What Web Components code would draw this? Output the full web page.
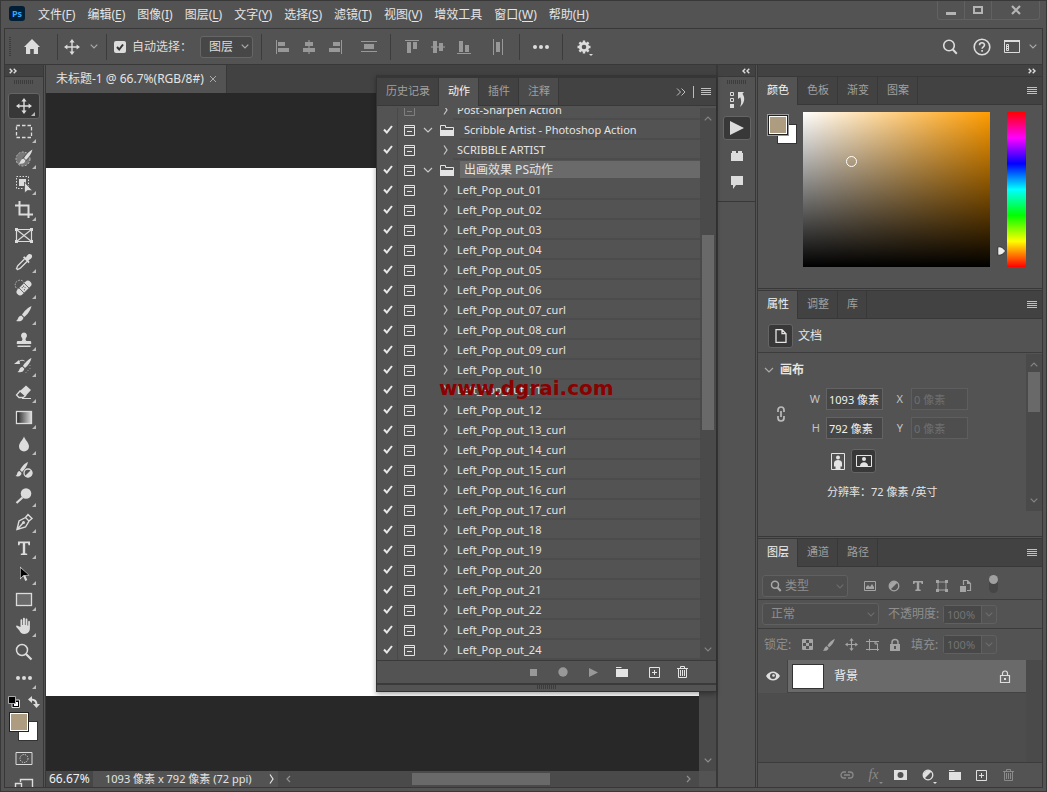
<!DOCTYPE html>
<html lang="zh-CN">
<head>
<meta charset="utf-8">
<title>Photoshop</title>
<style>
html, body { margin: 0; height: 100%; background: #535353; }
body { font: 12px/16px "Noto Sans", "Noto Sans CJK SC", sans-serif; color: #e4e4e4; overflow: hidden; }
</style>
</head>
<body>
<ps-app></ps-app>
<script>
const RESET = `
:host, *, *::before, *::after { box-sizing: border-box; }
:host { display: block; }
:host([hidden]) { display: none; }
button, input, select { font: inherit; color: inherit; margin: 0; padding: 0; border: 0; background: none; border-radius: 0; appearance: none; outline: none; min-width: 0; }
button { display: flex; align-items: center; justify-content: center; flex: none; cursor: default; }
.grip { width: 20px; height: 4px; background: repeating-linear-gradient(90deg, #3c3c3c 0 1px, #535353 1px 2px); }
`;
function define(name, html, setup) {
  const tpl = document.createElement('template');
  tpl.innerHTML = html.replace('<style>', '<style>' + RESET);
  customElements.define(name, class extends HTMLElement {
    constructor() {
      super();
      this.attachShadow({ mode: 'open' }).append(tpl.content.cloneNode(true));
      if (setup) setup.call(this, this.shadowRoot);
    }
  });
}

/* Each icon: [width, height, markup]; currentColor is the ink. */
const ICONS = {
  move: [16,16,'<path d="M8 2v12M2 8h12" stroke="currentColor" stroke-width="1.4"/><path d="M8 0l2.6 3.4H5.4zM8 16l2.6-3.4H5.4zM0 8l3.4-2.6v5.2zM16 8l-3.4-2.6v5.2z" fill="currentColor"/>'],
  marquee: [18,16,'<rect x="1.5" y="1.5" width="15" height="12" fill="none" stroke="currentColor" stroke-width="1.3" stroke-dasharray="3.5 2"/>'],
  quick: [20,20,'<circle cx="9" cy="11" r="7" fill="#777" stroke="#bbb" stroke-dasharray="2 1.5"/><path d="M18.500 2L10 12" stroke="#535353" stroke-width="5"/><path d="M18.500 1.500c-3 1.500-6.500 5-8.500 8.500l2 2c3-3 5.500-6.500 6.500-10.500zM9.500 10.500l2 2c-.5 2.500-3 4-7 3 2.500-1 1.500-4 5-5z" fill="currentColor"/>'],
  object: [20,20,'<rect x="2.500" y="2.500" width="12" height="12" fill="none" stroke="currentColor" stroke-dasharray="1.500 1.500"/><path d="M5 5h7v7H5z" fill="currentColor"/><path d="M10.500 8v11l3-2.500 5 .3z" fill="currentColor" stroke="#535353" stroke-width=".8"/>'],
  crop: [18,18,'<path d="M4.500 0v13.500H18M0 4.500h13.500V17" fill="none" stroke="currentColor" stroke-width="2"/>'],
  frame: [18,16,'<path d="M1.500 1.500h15v12h-15zM1.500 1.500l15 12M16.500 1.500l-15 12" fill="none" stroke="currentColor" stroke-width="1.2"/><path d="M0 0h3v3H0zM15 0h3v3h-3zM0 12h3v3H0zM15 12h3v3h-3z" fill="currentColor"/>'],
  dropper: [18,18,'<path d="M9.500 6L3 12.500c-1 1-.5 1.800-1.500 3l1 1c1.200-1 2-.5 3-1.500L12 8.500" fill="none" stroke="currentColor" stroke-width="1.300"/><path d="M8 4.500l1.200-1.200 1.600 1.100c1-1 1.500-2.600 3-3.400 2.500-.6 4 1.500 3 3.400-.8 1.400-2.300 2-3.300 3l1.200 1.600-1.200 1.200z" fill="currentColor"/>'],
  heal: [20,18,'<circle cx="6" cy="6" r="4.800" fill="none" stroke="#bbb" stroke-dasharray="1.600 1.300"/><g transform="rotate(-45 10 9)"><rect x="1" y="5.500" width="18" height="7" rx="3.500" fill="currentColor"/><path d="M6.500 5.500v7M13.500 5.500v7" stroke="#535353" stroke-width=".8"/><path d="M8.500 7h1v1h-1zM10.500 9h1v1h-1zM8.500 10h1v1h-1zM10.500 7h1v1h-1z" fill="#535353"/></g>'],
  brush: [18,18,'<path d="M16.500 1c-3.500 1.500-7.500 5.300-9.500 8.800l2.200 2.200c3.500-2.500 6.500-7.200 7.300-11zM6.300 10.500l2.200 2.200c-.6 3.200-4 4.300-7.500 3.300 2.400-.8 1.500-4.800 5.300-5.500z" fill="currentColor"/>'],
  stamp: [18,18,'<path d="M9 1.500a3.200 3.200 0 0 1 2 5.500c-.7.800-.7 2 .5 3H15c.8 0 1.200.6 1.200 1.300V13H1.800v-1.700C1.800 10.600 2.200 10 3 10h3.500c1.200-1 1.200-2.200.5-3a3.200 3.200 0 0 1 2-5.500zM2.500 14.500h13V16h-13z" fill="currentColor"/>'],
  hbrush: [20,18,'<path d="M17.500 1c-3 1.300-6.800 4.800-8.500 8l2 2c3-2.500 5.800-6.300 6.500-10zM8.300 9.800l2 2c-.6 3-3.300 4.200-6.800 3.200 2.200-.8 1.500-4.500 4.800-5.200z" fill="currentColor"/><path d="M4 6c1.500-3 4.500-3.200 6.500-2" fill="none" stroke="currentColor"/><path d="M0 7l6 0-1-4z" fill="currentColor"/><path d="M16 8v1M16 11v1M14 13v1M12 15v1" stroke="#999"/>'],
  eraser: [18,18,'<path d="M11 2.500L16 7l-5.500 6L5 8z" fill="currentColor"/><path d="M5 8l-3.500 4 2.500 2.500h4l2.500-1.800z" fill="none" stroke="currentColor" stroke-width="1.300"/><path d="M7 15.500h9" stroke="currentColor"/>'],
  gradient: [18,16,'<defs><linearGradient id="g"><stop offset="0" stop-color="#222"/><stop offset="1" stop-color="#ddd"/></linearGradient></defs><rect x="1.500" y="1.500" width="15" height="12" fill="url(#g)" stroke="currentColor" stroke-width="1.300"/>'],
  drop: [18,18,'<path d="M9 1.500c1.500 3.800 5 6.500 5 10a5 5 0 0 1-10 0c0-3.500 3.500-6.200 5-10z" fill="currentColor"/>'],
  mix: [18,18,'<path d="M13 1C10 2 6.800 5.500 5 9l2 2c2.500-2.500 5.400-6.400 6-10zM4.500 10l2 2c0 3-3 4-6 3 2.200-.8 1-4.500 4-5z" fill="currentColor"/><circle cx="13" cy="12" r="4" fill="none" stroke="currentColor" stroke-width="1.300"/><path d="M10 15l6-6a4 4 0 0 1-6 6z" fill="currentColor"/>'],
  dodge: [18,18,'<circle cx="11" cy="6.500" r="5.300" fill="currentColor"/><path d="M7.500 10.500L1.500 16" stroke="currentColor" stroke-width="2.200"/>'],
  pen: [18,18,'<path d="M2 16.500L4 8l6.500-3.500L14 8l-3.500 6zM2 16.500L8 10M10.500 4.500l2.500-3 4 4-3 2.500" fill="none" stroke="currentColor" stroke-width="1.400"/><circle cx="8.500" cy="9.500" r="1.500" fill="currentColor"/>'],
  type: [16,16,'<path d="M2 1.500h12v3.800h-1.500L12 3.300H9.200v9.900l2 .5V15H4.800v-1.300l2-.5V3.300H4L3.500 5.300H2z" fill="currentColor"/>'],
  ltype: [10,10,'<path d="M0 0h10v3H8.700L8 1.500H6.200v6.800l1.500.4V10H2.300V8.700l1.500-.4V1.500H2L1.300 3H0z" fill="currentColor"/>'],
  select: [18,18,'<path d="M5 1.500v13l3.300-3.200 2 4.700 2-.9-2-4.600h4.200z" fill="currentColor"/><path d="M5.600 3v10l2.700-2.800 5-.5z" fill="#000"/>'],
  rect: [18,16,'<rect x="1.500" y="1.500" width="15" height="12" fill="#6a6a6a" stroke="currentColor" stroke-width="1.300"/>'],
  hand: [18,18,'<path d="M5.500 10V3.200c0-1.400 1.800-1.400 1.800 0V8h.7V1.800c0-1.400 1.900-1.400 1.900 0V8h.7V2.500c0-1.400 1.800-1.400 1.800 0v6h.8V4.800c0-1.300 1.700-1.300 1.700 0v6c0 4-2 6.200-5.500 6.200-3 0-4-1.500-5-3.500L1.300 10c-.7-1.500.9-2 1.700-1z" fill="currentColor"/>'],
  zoom: [18,18,'<circle cx="7" cy="7" r="5.500" fill="none" stroke="currentColor" stroke-width="1.500"/><path d="M11 11l5.500 5.500" stroke="currentColor" stroke-width="2.200"/>'],
  dots: [18,6,'<circle cx="3" cy="3" r="2" fill="currentColor"/><circle cx="9" cy="3" r="2" fill="currentColor"/><circle cx="15" cy="3" r="2" fill="currentColor"/>'],
  defaults: [12,12,'<path d="M4 4h7.500v7.500H4z" fill="#000" stroke="#ddd"/><path d="M6 6h4v4H6z" fill="#fff"/><path d="M.5.500h7v7h-7z" fill="#000" stroke="#aaa"/>'],
  swap: [12,12,'<path d="M3 3.500c3.500 0 5.500 1.500 5.500 5" fill="none" stroke="currentColor" stroke-width="2"/><path d="M0 3.500L4 0v7zM8.500 12L5 8h7z" fill="currentColor"/>'],
  mask: [18,14,'<path d="M1 .5h16v12H1z" fill="none" stroke="currentColor"/><circle cx="9" cy="6.500" r="4" fill="none" stroke="currentColor" stroke-dasharray="1.200 1.200"/>'],
  screen: [18,14,'<path d="M5.500 3V.500h12v10h-8M.5 4.500h6v8h-6z" fill="none" stroke="currentColor" stroke-width="1.400"/>'],
  home: [18,16,'<path d="M9 0l8 8h-2v7h-4.200v-5H7.200v5H3V8H1z" fill="currentColor"/>'],
  chev: [8,5,'<path d="M.7.700L4 4 7.300.7" fill="none" stroke="currentColor" stroke-width="1.200"/>'],
  up: [8,5,'<path d="M.7 4.300L4 1l3.300 3.300" fill="none" stroke="currentColor" stroke-width="1.200"/>'],
  down: [10,6,'<path d="M1 1l4 4 4-4" fill="none" stroke="currentColor" stroke-width="1.200"/>'],
  right: [5,10,'<path d="M1 .5L4 5 1 9.500" fill="none" stroke="currentColor" stroke-width="1.200"/>'],
  left: [5,8,'<path d="M4 1L1 4l3 3" fill="none" stroke="currentColor" stroke-width="1.200"/>'],
  next: [5,8,'<path d="M1 1l3 3-3 3" fill="none" stroke="currentColor" stroke-width="1.200"/>'],
  ffwd: [8,6,'<path d="M.7.700L3 3 .7 5.300M4.700.700L7 3 4.700 5.300" fill="none" stroke="currentColor" stroke-width="1.400"/>'],
  frev: [8,6,'<path d="M3.300.700L1 3l2.300 2.300M7.300.700L5 3l2.300 2.300" fill="none" stroke="currentColor" stroke-width="1.400"/>'],
  more: [10,8,'<path d="M1 .5L4.500 4 1 7.500M5.500.500L9 4 5.500 7.500" fill="none" stroke="currentColor"/>'],
  lines: [10,8,'<path d="M0 .5h10M0 2.500h10M0 4.500h10M0 6.500h10" stroke="currentColor"/>'],
  al: [14,14,'<path d="M.5 0v14" stroke="currentColor"/><path d="M2 2h7v4H2zM2 8h11v4H2z" fill="currentColor"/>'],
  ac: [14,14,'<path d="M7 0v14" stroke="currentColor" stroke-width="1.200"/><path d="M3 2h8v4H3zM1 8h12v4H1z" fill="currentColor"/>'],
  ar: [14,14,'<path d="M13.500 0v14" stroke="currentColor"/><path d="M5 2h7v4H5zM1 8h11v4H1z" fill="currentColor"/>'],
  dh: [16,12,'<path d="M0 .5h16M0 10.500h16" stroke="currentColor"/><path d="M3 3h10v5H3z" fill="currentColor"/>'],
  at: [14,14,'<path d="M0 .5h14" stroke="currentColor"/><path d="M2 2h4v11H2zM8 2h4v7H8z" fill="currentColor"/>'],
  am: [14,14,'<path d="M0 7h14" stroke="currentColor" stroke-width="1.200"/><path d="M2 1h4v12H2zM8 3h4v8H8z" fill="currentColor"/>'],
  ab: [14,14,'<path d="M0 13.500h14" stroke="currentColor"/><path d="M2 1h4v11H2zM8 5h4v7H8z" fill="currentColor"/>'],
  dv: [10,16,'<path d="M.5 0v16M9.500 0v16" stroke="currentColor"/><path d="M3 3h4v10H3z" fill="currentColor"/>'],
  gear: [18,18,'<circle cx="9" cy="9" r="3.700" fill="none" stroke="currentColor" stroke-width="2.800"/><path d="M9 2.500v2.500M9 13v2.500M2.500 9H5M13 9h2.500M4.400 4.400l1.800 1.800M11.800 11.800l1.800 1.800M4.400 13.600l1.800-1.800M11.800 6.200l1.800-1.800" stroke="currentColor" stroke-width="2.400"/><path d="M14 16h4l-2 2z" fill="currentColor"/>'],
  search: [16,16,'<circle cx="7" cy="6.500" r="5.300" fill="none" stroke="currentColor" stroke-width="1.600"/><path d="M10.800 10.500l4 4.200" stroke="currentColor" stroke-width="2"/>'],
  find: [12,12,'<circle cx="5" cy="4.800" r="3.500" fill="none" stroke="currentColor" stroke-width="1.500"/><path d="M7.500 7.500l3.200 3.500" stroke="currentColor" stroke-width="2"/>'],
  help: [18,18,'<circle cx="9" cy="9" r="7.800" fill="none" stroke="currentColor" stroke-width="1.600"/><path d="M6.500 7.200C6.500 4 11.500 4 11.500 7c0 1.800-2.400 1.800-2.400 3.800M9.100 12v1.700" fill="none" stroke="currentColor" stroke-width="1.600"/>'],
  work: [16,13,'<path d="M.5 1h15v11.500H.5z" fill="none" stroke="currentColor"/><path d="M0 0h16v2H0z" fill="currentColor"/><path d="M2.500 4.500h2v6h-2zM2.500 6.500h2M2.500 8.500h2" fill="none" stroke="currentColor"/>'],
  min: [10,3,'<path d="M0 0h10v3H0z" fill="currentColor"/>'],
  max: [10,8,'<path d="M1 1h8v6H1z" fill="none" stroke="currentColor" stroke-width="2"/>'],
  close: [10,8,'<path d="M1 0l8 8M9 0L1 8" stroke="currentColor" stroke-width="2.200"/>'],
  x: [6,6,'<path d="M0 0l6 6M6 0L0 6" stroke="currentColor"/>'],
  dialog: [11,11,'<path d="M.5.500h10v10H.5zM.5 2.500h10M3 6.500h5" fill="none" stroke="currentColor"/>'],
  folder: [14,11,'<path d="M.5 10.500v-10h5v2h8v8z" fill="none" stroke="currentColor"/><path d="M0 5h14v6H0z" fill="currentColor"/>'],
  group: [12,10,'<path d="M0 0h5l1 1H0zM0 2h12v8H0z" fill="currentColor"/>'],
  stop: [7,7,'<path d="M0 0h7v7H0z" fill="currentColor"/>'],
  rec: [10,10,'<circle cx="5" cy="5" r="4.700" fill="currentColor"/>'],
  play: [9,9,'<path d="M0 0l9 4.500L0 9z" fill="currentColor"/>'],
  bigplay: [14,14,'<path d="M0 0l14 7-14 7z" fill="currentColor"/>'],
  plus: [11,11,'<path d="M.5.500h10v10H.5zM5.500 3v5M3 5.500h5" fill="none" stroke="currentColor"/>'],
  trash: [11,12,'<path d="M0 2.500h11M3.500 2V.500h4V2M1.500 3v8.500h8V3M3.500 4v6M5.500 4v6M7.500 4v6" fill="none" stroke="currentColor"/>'],
  history: [16,18,'<path d="M1.500 1.500h3v3h-3zM1.500 7.500h3v3h-3z" fill="none" stroke="currentColor"/><path d="M1 13h4v4H1z" fill="currentColor"/><path d="M9 1h6l-1.500 1.800C16.500 7 15.500 12.500 11 16c1.500-3.500 1.500-6.500.3-9.800L9 8z" fill="currentColor"/>'],
  brick: [12,12,'<path d="M0 4h1V2h4v2h2V2h4v2h1v8H0z" fill="currentColor"/>'],
  chat: [14,13,'<path d="M1 0h12v9H6l-3 4V9H1z" fill="currentColor"/>'],
  page: [12,14,'<path d="M1 .7h6l4 4v8.600H1zM7 .7v4h4" fill="none" stroke="currentColor" stroke-width="1.300"/>'],
  link: [10,16,'<path d="M2 6V4a3 3 0 0 1 6 0v2M2 10v2a3 3 0 0 0 6 0v-2M5 5v6" fill="none" stroke="currentColor" stroke-width="1.700"/>'],
  port: [14,17,'<path d="M.5.500h13v16H.5z" fill="none" stroke="currentColor"/><circle cx="7" cy="4.500" r="2" fill="currentColor"/><path d="M3 10c0-4 8-4 8 0v3.500H9.500V16h-5v-2.500H3z" fill="currentColor"/>'],
  land: [16,12,'<path d="M.5.500h15v11H.5z" fill="none" stroke="currentColor"/><circle cx="8" cy="4" r="2" fill="currentColor"/><path d="M4 11c0-5 8-5 8 0z" fill="currentColor"/>'],
  image: [12,10,'<path d="M.5.500h11v9H.5z" fill="none" stroke="currentColor"/><path d="M2 8V6l2-2 2 2 2-3 2 3v2z" fill="currentColor"/>'],
  adjust: [12,12,'<circle cx="6" cy="6" r="4.800" fill="none" stroke="currentColor" stroke-width="1.300"/><path d="M2.500 9.500l7-7a5 5 0 0 0-7 7z" fill="currentColor"/>'],
  shape: [12,12,'<path d="M2 2h8v8H2z" fill="none" stroke="currentColor"/><path d="M0 0h3v3H0zM9 0h3v3H9zM0 9h3v3H0zM9 9h3v3H9z" fill="currentColor"/>'],
  smart: [12,12,'<path d="M3.500 5V.500h4l3 3v7H7" fill="none" stroke="currentColor" stroke-width="1.200"/><path d="M0 6h6v6H0zM7 0v4h4z" fill="currentColor"/>'],
  checker: [11,11,'<path d="M.5.500h10v10H.5z" fill="none" stroke="currentColor"/><path d="M1 1h3v3H1zM7 1h3v3H7zM4 4h3v3H4zM1 7h3v3H1zM7 7h3v3H7z" fill="currentColor"/>'],
  board: [14,12,'<path d="M3.500 0v2M0 2.500h13M3.500 2.500v9M0 10.500h13M11.500 12V5L9 2.500V5h2.500" fill="none" stroke="currentColor"/>'],
  lock: [10,12,'<path d="M2 5V3.500a3 3 0 0 1 6 0V5" fill="none" stroke="currentColor" stroke-width="1.500"/><path d="M0 5h10v7H0z" fill="currentColor"/><path d="M4 7h2v3H4z" fill="#535353"/>'],
  lockline: [10,13,'<path d="M2.500 5V3.500a2.500 2.500 0 0 1 5 0V5M.5 5.500h9v7h-9z" fill="none" stroke="currentColor" stroke-width="1.200"/><path d="M4 8h2v2H4z" fill="currentColor"/>'],
  eye: [14,10,'<path d="M0 5c3.500-6 10.500-6 14 0-3.500 6-10.500 6-14 0z" fill="currentColor"/><circle cx="7" cy="5" r="3" fill="#535353"/><circle cx="7.500" cy="4.500" r="1.300" fill="currentColor"/>'],
  chain: [14,8,'<path d="M6 1H4a3 3 0 0 0 0 6h2M8 1h2a3 3 0 0 1 0 6H8M4 4h6" fill="none" stroke="currentColor" stroke-width="1.300"/>'],
  lmask: [13,10,'<path d="M0 0h13v10H0zM6.500 2a3 3 0 1 0 0 6 3 3 0 0 0 0-6z" fill="currentColor" fill-rule="evenodd"/>'],
};
customElements.define('ps-icon', class extends HTMLElement {
  constructor() { super(); this.attachShadow({ mode: 'open' }); }
  connectedCallback() {
    const [w, h, body] = ICONS[this.getAttribute('name')];
    const size = this.getAttribute('size');
    this.shadowRoot.innerHTML = `<style>:host{display:inline-flex;flex:none;pointer-events:none}svg{display:block;overflow:visible}</style><svg width="${size || w}" height="${size || h}" viewBox="0 0 ${w} ${h}" aria-hidden="true">${body}</svg>`;
  }
});

/* ---------- menu bar ---------- */
define('ps-menubar', `<style>
:host { display: flex; height: 27px; flex: none; padding-left: 8px; }
.logo { width: 16px; height: 15px; margin: 5px 7px 0 0; border-radius: 3px; background: #001e36; color: #31a8ff; font: bold 9px/15px "Open Sans", sans-serif; text-align: center; flex: none; }
nav { display: flex; flex: 1; }
nav button { padding: 0 6px; white-space: nowrap; }
u { text-underline-offset: 2px; }
.win { display: flex; height: 19px; margin-right: 6px; border: 1px solid #616161; border-top: 0; border-radius: 0 0 3px 3px; color: #b4b4b4; }
.win button { width: 27px; border-right: 1px solid #616161; }
.win button:last-child { width: 47px; border: 0; }
.win button:first-child { padding-top: 6px; }
</style>
<div class="logo">Ps</div>
<nav></nav>
<div class="win"><button aria-label="最小化"><ps-icon name="min"></ps-icon></button><button aria-label="最大化"><ps-icon name="max"></ps-icon></button><button aria-label="关闭"><ps-icon name="close"></ps-icon></button></div>`,
function (root) {
  root.querySelector('nav').innerHTML = '文件F 编辑E 图像I 图层L 文字Y 选择S 滤镜T 视图V 增效工具 窗口W 帮助H'.split(' ')
    .map(t => `<button>${t.replace(/([A-Z])$/, '(<u>$1</u>)')}</button>`).join('');
});

/* ---------- drop-down ---------- */
define('ps-select', `<style>
:host { display: grid; align-items: center; height: 22px; border: 1px solid #666; border-radius: 3px; background: #474747; }
select, ps-icon { grid-area: 1 / 1; }
select { width: 100%; height: 100%; padding-left: var(--pad, 8px); }
ps-icon { justify-self: end; margin-right: 3px; color: var(--chev, #aaa); }
</style><select></select><ps-icon name="chev"></ps-icon>`,
function (root) {
  const s = root.querySelector('select');
  s.setAttribute('aria-label', this.getAttribute('label') || '');
  s.innerHTML = `<option>${this.getAttribute('value') || ''}</option>`;
});

/* ---------- options bar ---------- */
define('ps-options', `<style>
:host { display: flex; align-items: center; height: 36px; flex: none; border-bottom: 1px solid #383838; color: #dcdcdc; padding-right: 2px; }
.bar, .group { display: flex; align-items: center; }
.bar { flex: 1; gap: 8px; }
.handle { width: 2px; height: 20px; margin: 0 -4px 0 4px; background: repeating-linear-gradient(#3c3c3c 0 1px, #535353 1px 2px); }
hr { width: 1px; height: 26px; margin: 0; border: 0; background: #3c3c3c; flex: none; }
.home { width: 34px; }
.mv { margin: 0 -4px 0 -8px; } .mv button { width: 28px; } .mv button + button { width: 16px; color: #aaa; }
.auto { margin-left: -1px; gap: 6px; }
.auto label { width: 60px; }
.auto input { width: 12px; height: 12px; border-radius: 2px; background: #dcdcdc url("data:image/svg+xml,%3Csvg xmlns='http://www.w3.org/2000/svg' width='12' height='12'%3E%3Cpath d='M3 6l2.200 2.500L9 3.500' fill='none' stroke='%23333' stroke-width='2'/%3E%3C/svg%3E"); }
ps-select { width: 53px; }
.ic button { width: 26px; }
.dim { color: #989898; }
.r button { width: 32px; } .r button:nth-child(3) { width: 28px; } .r button:last-child { width: 14px; color: #aaa; }
</style>
<div class="bar"><span class="handle"></span>
<button class="home" aria-label="主页"><ps-icon name="home"></ps-icon></button><hr>
<div class="group mv"><button aria-label="移动工具"><ps-icon name="move"></ps-icon></button><button aria-label="预设"><ps-icon name="chev"></ps-icon></button></div><hr>
<div class="group auto"><input type="checkbox" id="auto" checked><label for="auto">自动选择：</label></div>
<ps-select label="自动选择" value="图层"></ps-select><hr>
<div class="group ic dim"><button aria-label="左对齐"><ps-icon name="al"></ps-icon></button><button aria-label="水平居中"><ps-icon name="ac"></ps-icon></button><button aria-label="右对齐"><ps-icon name="ar"></ps-icon></button></div>
<div class="group ic dim"><button aria-label="垂直分布"><ps-icon name="dh"></ps-icon></button></div><hr>
<div class="group ic dim"><button aria-label="顶对齐"><ps-icon name="at"></ps-icon></button><button aria-label="垂直居中"><ps-icon name="am"></ps-icon></button><button aria-label="底对齐"><ps-icon name="ab"></ps-icon></button></div>
<div class="group ic dim"><button aria-label="水平分布"><ps-icon name="dv"></ps-icon></button></div><hr>
<div class="group ic"><button aria-label="更多"><ps-icon name="dots"></ps-icon></button></div><hr>
<div class="group ic"><button aria-label="设置"><ps-icon name="gear"></ps-icon></button></div></div>
<div class="group r"><button aria-label="搜索"><ps-icon name="search"></ps-icon></button><button aria-label="帮助"><ps-icon name="help"></ps-icon></button><button aria-label="工作区"><ps-icon name="work"></ps-icon></button><button aria-label="工作区菜单"><ps-icon name="chev"></ps-icon></button></div>`);

/* ---------- foreground / background swatches ---------- */
define('ps-swatches', `<style>
:host { position: relative; width: 29px; height: 29px; flex: none; }
button { position: absolute; width: 20px; height: 20px; border: 1px solid #333; }
.bg { right: 0; bottom: 0; background: #fff; }
.fg { left: 0; top: 0; background: #ae9c80; border-color: #222; box-shadow: inset 0 0 0 1px #fff; outline: var(--ring, 0) solid #999; }
</style><button class="bg" aria-label="背景色"></button><button class="fg" aria-label="前景色"></button>`);

/* ---------- toolbar ---------- */
define('ps-toolbar', `<style>
:host { display: flex; flex-direction: column; align-items: center; width: 39px; flex: none; border-right: 1px solid #383838; overflow: hidden; color: #dcdcdc; padding-right: 1px; }
.strip { height: 12px; align-self: stretch; margin-right: -1px; background: #424242; border-bottom: 1px solid #383838; padding-left: 4px; display: flex; align-items: center; justify-content: flex-start; }
.grip { margin: 3px 0 9px; flex: none; }
.tool { position: relative; width: 32px; height: 26px; border-radius: 3px; }
.tool.more::after { content: ""; position: absolute; right: 4px; bottom: 2px; border: 2px solid; border-color: transparent #bbb #bbb transparent; }
.on { background: #383838; border: 1px solid #656565; }
.mini { display: flex; gap: 8px; margin: 5px 0 4px; align-items: center; }
ps-swatches { margin-bottom: 11px; }
.mask { margin-bottom: 13px; }
</style>
<button class="strip" aria-label="展开"><ps-icon name="ffwd"></ps-icon></button><div class="grip"></div>
<div class="tools"></div>
<div class="mini"><button aria-label="默认颜色"><ps-icon name="defaults"></ps-icon></button><button aria-label="切换颜色"><ps-icon name="swap"></ps-icon></button></div>
<ps-swatches></ps-swatches>
<button class="mask" aria-label="快速蒙版"><ps-icon name="mask"></ps-icon></button>
<button aria-label="屏幕模式"><ps-icon name="screen"></ps-icon></button>`,
function (root) {
  const single = ['frame', 'mix', 'zoom'];
  root.querySelector('.tools').innerHTML = 'move marquee quick object crop frame dropper heal brush stamp hbrush eraser gradient drop mix dodge pen type select rect hand zoom dots'.split(' ')
    .map((n, i) => `<button class="tool ${single.includes(n) ? '' : 'more'} ${i ? '' : 'on'}" aria-label="${n}"><ps-icon name="${n}"></ps-icon></button>`).join('');
});

/* ---------- document window ---------- */
define('ps-document', `<style>
:host { display: grid; grid-template: 28px 1fr 16px / 1fr 17px; flex: 1; min-width: 0; margin-left: 1px; border: solid #383838; border-width: 0 1px; position: relative; }
.tabs { grid-column: 1 / 3; background: #424242; display: flex; }
.tab { display: flex; align-items: center; background: #535353; padding: 0 10px; border-right: 1px solid #383838; gap: 6px; white-space: nowrap; }
.tab button { color: #aaa; }
.stage { background: #282828; display: flex; padding: 75px 0; }
.canvas { flex: 1; background: #fff; }
.v { background: #4a4a4a; display: flex; align-items: flex-end; justify-content: center; padding-bottom: 8px; color: #909090; }
.status { display: flex; background: #535353; align-items: center; min-width: 0; white-space: nowrap; }
.status input { width: 47px; height: 16px; padding-left: 3px; background: #464646; color: #f0f0f0; }
.info { padding-left: 12px; width: 171px; font: 11px/16px "Noto Sans", "Noto Sans CJK SC", sans-serif; }
.more { width: 14px; height: 16px; }
.h { flex: 1; align-self: stretch; display: flex; align-items: center; justify-content: space-between; background: #4a4a4a; padding: 0 8px; color: #909090; }
.thumb { width: 138px; height: 12px; margin-right: 16px; background: #696969; }
</style>
<div class="tabs"><div class="tab"><span>未标题-1 @ 66.7%(RGB/8#)</span><button aria-label="关闭文档"><ps-icon name="x"></ps-icon></button></div></div>
<div class="stage"><div class="canvas"></div></div>
<div class="v"><ps-icon name="chev"></ps-icon></div>
<div class="status"><input aria-label="缩放" value="66.67%"><span class="info">1093 像素 x 792 像素 (72 ppi)</span>
<button class="more" aria-label="状态菜单"><ps-icon name="right"></ps-icon></button>
<div class="h"><ps-icon name="left"></ps-icon><span class="thumb"></span><ps-icon name="next"></ps-icon></div></div>
<div></div><slot></slot>`);

/* ---------- tabs ---------- */
define('ps-tabs', `<style>
:host { display: flex; height: 28px; flex: none; background: #424242; border-bottom: 1px solid #383838; font-size: 11px; color: #a0a0a0; }
button { height: 27px; padding: 0 8px 2px 9px; border-right: 1px solid #383838; }
.on { background: #535353; color: #f4f4f4; height: 28px; padding-bottom: 3px; }
.lit { background: #4b4b4b; }
.menu { margin-left: auto; padding: 0 5px 0 0; border: 0; gap: 7px; color: #c0c0c0; }
.menu i { width: 1px; height: 12px; background: #bbb; }
</style>`,
function (root) {
  const on = +(this.getAttribute('on') || 0), lit = this.getAttribute('lit');
  const names = this.getAttribute('names').split(' ');
  root.append(...names.map((n, i) => {
    const b = document.createElement('button');
    b.textContent = n;
    b.setAttribute('role', 'tab');
    b.className = (i === on ? 'on' : '') + (lit === String(i) ? 'lit' : '');
    return b;
  }));
  const m = document.createElement('button');
  m.className = 'menu';
  m.setAttribute('aria-label', '面板菜单');
  m.innerHTML = (this.hasAttribute('float') ? '<ps-icon name="more"></ps-icon><i></i>' : '') + '<ps-icon name="lines"></ps-icon>';
  root.append(m);
});

/* ---------- scroll bar ---------- */
define('ps-scroll', `<style>
:host { display: flex; flex-direction: column; align-items: center; width: 16px; flex: none; padding: 8px 0; background: #4a4a4a; color: #858585; }
div { width: 12px; background: #696969; flex: 0 0 var(--len); margin-top: var(--at); }
.end { margin-top: auto; }
</style><ps-icon name="up"></ps-icon><div></div><ps-icon class="end" name="chev"></ps-icon>`);

/* ---------- actions panel ---------- */
define('ps-action', `<style>
:host { display: flex; align-items: center; height: 20px; flex: none; white-space: nowrap; font-size: 11px; }
input { width: 21px; height: 20px; flex: none; border-right: 1px solid #494949; }
input:checked { background: url("data:image/svg+xml,%3Csvg xmlns='http://www.w3.org/2000/svg' width='10' height='9'%3E%3Cpath d='M1 4.500l2.800 3L9 1' fill='none' stroke='%23e8e8e8' stroke-width='2'/%3E%3C/svg%3E") 6px 5px no-repeat; }
.dlg { width: 23px; height: 20px; }
.arrow { width: 32px; height: 20px; justify-content: flex-end; padding-right: 5px; color: #c8c8c8; }
.folder { display: none; }
.name { flex: 1; align-self: stretch; padding-left: 4px; border-bottom: 2px solid #4c4c4c; line-height: 19px; }
:host([set]) .folder { display: flex; width: 27px; padding-left: 7px; }
:host([set]) .arrow { width: 12px; padding: 0; }
:host([set]) .name { border-top: 1px solid #535353; line-height: 18px; }
:host([selected]) .name { background: #6a6a6a; background-clip: padding-box; border-bottom-color: #535353; font-size: 12px; }
:host([off]) .dlg { opacity: .3; }
</style>
<input type="checkbox" aria-label="切换项目"><button class="dlg" aria-label="切换对话"><ps-icon name="dialog"></ps-icon></button><button class="arrow" aria-label="展开"></button><span class="folder"><ps-icon name="folder"></ps-icon></span><div class="name"><slot></slot></div>`,
function (root) {
  root.querySelector('input').checked = !this.hasAttribute('off');
  root.querySelector('.arrow').innerHTML = `<ps-icon name="${this.hasAttribute('set') ? 'down' : 'right'}"></ps-icon>`;
});
define('ps-actions', `<style>
:host { position: absolute; top: 10px; right: 0; bottom: 95px; width: 340px; display: flex; flex-direction: column; background: #535353; border: 1px solid #333; border-top: 3px solid #363636; border-right: 0; box-shadow: 0 2px 5px rgba(0,0,0,.35); }
.body { flex: 1; display: flex; min-height: 0; padding-top: 2px; }
.list { flex: 1; display: flex; flex-direction: column; justify-content: flex-end; overflow: hidden; min-width: 0; }
ps-scroll { --at: 114px; --len: 195px; }
.foot { display: flex; justify-content: flex-end; align-items: center; height: 25px; flex: none; border: solid #3a3a3a; border-width: 1px 0 2px; padding-right: 20px; }
.foot button { width: 28px; height: 20px; } .foot .w { width: 30px; } .foot .g { margin-right: 4px; }
.dim { color: #989898; }
.resize { height: 6px; flex: none; display: flex; justify-content: center; }
.mark { position: absolute; left: 62px; top: 298px; font: bold 20px/24px "DejaVu Sans", sans-serif; color: #8b0000; pointer-events: none; }
</style>
<ps-tabs names="历史记录 动作 插件 注释" on="1" lit="3" float></ps-tabs>
<div class="body"><div class="list"></div><ps-scroll></ps-scroll></div>
<div class="foot"><button class="w dim" aria-label="停止"><ps-icon name="stop"></ps-icon></button><button class="w dim" aria-label="记录"><ps-icon name="rec"></ps-icon></button><button class="w dim" aria-label="播放"><ps-icon name="play"></ps-icon></button><button class="g" aria-label="新组"><ps-icon name="group"></ps-icon></button><button aria-label="新动作"><ps-icon name="plus"></ps-icon></button><button aria-label="删除"><ps-icon name="trash"></ps-icon></button></div>
<div class="resize"><div class="grip"></div></div>
<div class="mark">www.dgrai.com</div>`,
function (root) {
  const curl = [7, 8, 9, 13, 14, 15, 16, 17];
  let html = '<ps-action off>Post-Sharpen Action</ps-action><ps-action set>Scribble Artist - Photoshop Action</ps-action><ps-action>SCRIBBLE ARTIST</ps-action><ps-action set selected>出画效果 PS动作</ps-action>';
  for (let i = 1; i <= 24; i++) html += `<ps-action>Left_Pop_out_${String(i).padStart(2, '0')}${curl.includes(i) ? '_curl' : ''}</ps-action>`;
  root.querySelector('.list').innerHTML = html;
});

/* ---------- icon dock ---------- */
define('ps-dock', `<style>
:host { width: 39px; flex: none; border: solid #383838; border-width: 0 1px; color: #dcdcdc; }
.strip { width: 100%; height: 12px; background: #424242; border-bottom: 1px solid #383838; padding-left: 18px; }
.icons { display: flex; flex-direction: column; align-items: center; padding: 3px 0 4px; border-bottom: 1px solid #383838; }
.icons button { width: 28px; height: 24px; border-radius: 3px; margin-bottom: 3px; }
.icons .on { background: #383838; border: 1px solid #656565; }
.icons button:nth-of-type(1) { margin-top: 3px; height: 26px; }
</style>
<button class="strip" aria-label="展开面板"><ps-icon name="frev"></ps-icon></button>
<div class="icons"><div class="grip"></div><button aria-label="历史记录"><ps-icon name="history"></ps-icon></button><button class="on" aria-label="动作"><ps-icon name="bigplay"></ps-icon></button><button aria-label="插件"><ps-icon name="brick"></ps-icon></button><button aria-label="注释"><ps-icon name="chat"></ps-icon></button></div>`);

/* ---------- colour panel ---------- */
define('ps-color', `<style>
:host { display: flex; height: 183px; padding: 7px 16px 21px 10px; }
ps-swatches { margin: 3px 6px 0 0; --ring: 1px; }
.field { flex: 1; position: relative; background: linear-gradient(to top, #000, transparent), linear-gradient(to right, #fff, #ff9c00); }
.dot { position: absolute; left: 43px; top: 44px; width: 11px; height: 11px; border: 1px solid #fff; border-radius: 50%; }
.hue { width: 19px; margin-left: 17px; position: relative; background: linear-gradient(#f00, #f0f, #00f, #0ff, #0f0, #ff0, #f00); }
.ptr { position: absolute; left: -10px; bottom: 11px; }
</style>
<ps-swatches></ps-swatches><div class="field"><span class="dot"></span></div>
<div class="hue"><svg class="ptr" width="9" height="10" viewBox="0 0 9 10"><path d="M.8 1c3-1 6 1.500 7.700 4C6.800 7.500 3.800 10 .8 9z" fill="#eee" stroke="#222" stroke-width=".8"/></svg></div>`);

/* ---------- properties panel ---------- */
define('ps-properties', `<style>
:host { height: 217px; }
.top { display: flex; align-items: center; height: 34px; border-bottom: 1px solid #3c3c3c; padding-left: 10px; gap: 5px; }
.btn { width: 25px; height: 24px; border: 1px solid #656565; border-radius: 3px; background: #383838; }
.body { display: flex; justify-content: space-between; padding-top: 1px; }
.main { width: 240px; padding: 8px 0 0 6px; }
.head { display: flex; align-items: center; gap: 6px; height: 16px; font-weight: bold; justify-content: flex-start; }
.head ps-icon { color: #aaa; }
.grid { display: grid; grid-template-columns: 34px 28px 58px 27px 58px; row-gap: 7px; margin: 10px 0; align-items: center; font-size: 11px; }
.grid ps-icon { grid-row: 1 / 3; justify-self: center; color: #bbb; }
label { text-align: right; padding-right: 6px; color: #c4c4c4; }
label.b { padding-right: 8px; }
.grid input { width: 57px; height: 22px; border: 1px solid #636363; background: #464646; padding-left: 2px; color: #f0f0f0; }
input:disabled { background: #4e4e4e !important; border-color: #5e5e5e !important; color: #6e6e6e !important; }
.orient { display: flex; align-items: center; gap: 6px; padding-left: 67px; }
.res { padding: 10px 0 0 63px; line-height: 18px; font-size: 11px; }
ps-scroll { height: 157px; --at: 5px; --len: 40px; }
</style>
<div class="top"><button class="btn" aria-label="文档"><ps-icon name="page"></ps-icon></button><span>文档</span></div>
<div class="body"><div class="main"><button class="head"><ps-icon name="down"></ps-icon>画布</button>
<div class="grid"><ps-icon name="link"></ps-icon><label for="w">W</label><input id="w" value="1093 像素"><label class="b" for="x">X</label><input id="x" value="0 像素" disabled><label for="h">H</label><input id="h" value="792 像素"><label class="b" for="y">Y</label><input id="y" value="0 像素" disabled></div>
<div class="orient"><button aria-label="纵向"><ps-icon name="port"></ps-icon></button><button class="btn" aria-label="横向"><ps-icon name="land"></ps-icon></button></div>
<div class="res">分辨率：72 像素 /英寸</div></div><ps-scroll></ps-scroll></div>`);

/* ---------- layers panel ---------- */
define('ps-layers', `<style>
:host { display: flex; flex-direction: column; flex: 1; min-height: 0; color: #8e8e8e; }
.row { display: flex; align-items: center; flex: none; padding-left: 4px; border-bottom: 1px solid #3c3c3c; }
.filter { height: 33px; padding-top: 6px; } .mode { height: 29px; } .lock { height: 31px; border: 0; padding-left: 6px; }
ps-select { background: #4e4e4e; border-color: #606060; --chev: #6c6c6c; }
.kind { display: grid; align-items: center; }
.kind > * { grid-area: 1 / 1; } .kind > ps-icon { margin-left: 8px; z-index: 1; color: #a8a8a8; }
.kind ps-select { width: 86px; --pad: 22px; }
.blend { width: 117px; margin-right: 9px; }
.kinds { display: flex; margin-left: 10px; color: #a4a4a4; } .kinds button { width: 24px; height: 22px; }
.toggle { width: 9px; height: 18px; border-radius: 5px; background: #464646; margin: -4px 0 0 11px; appearance: none; }
.toggle::before { content: ""; display: block; width: 9px; height: 9px; border-radius: 50%; background: #a0a0a0; }
label { width: 55px; white-space: nowrap; }
.locks { display: flex; margin-left: 4px; width: 115px; color: #a4a4a4; } .locks button { width: 22px; height: 22px; }
.lock > span { width: 28px; white-space: nowrap; } .lock label { width: 32px; }
.pct { display: flex; height: 19px; border: 1px solid #606060; border-radius: 3px; align-items: center; width: 54px; font-size: 11px; }
.pct input { width: 38px; height: 17px; padding-left: 3px; background: #484848; color: #747474; border-right: 1px solid #606060; }
.pct button { width: 14px; color: #6c6c6c; }
.list { flex: 1; display: flex; background: #4d4d4d; min-height: 0; border-bottom: 1px solid #3c3c3c; }
.items { flex: 1; }
.bar { width: 16px; background: #4a4a4a; }
.layer { display: flex; height: 33px; align-items: center; background: #6a6a6a; border-bottom: 1px solid #444; color: #f0f0f0; }
.layer .eye { width: 30px; height: 33px; background: #535353; border-right: 1px solid #444; color: #e0e0e0; }
.thumb { width: 32px; height: 25px; margin: 0 10px 0 4px; background: #fff; border: 1px solid #333; }
.layer ps-icon.l { margin: 0 16px 0 auto; color: #ddd; }
.foot { display: flex; height: 24px; flex: none; justify-content: flex-end; padding-right: 20px; align-items: center; color: #e0e0e0; }
.foot button { width: 27px; height: 22px; position: relative; }
.foot .dd::after { content: ""; position: absolute; right: 4px; bottom: 2px; border: 2px solid transparent; border-top-color: currentColor; border-bottom: 0; }
.foot .dim { color: #8a8a8a; }
.fx { font: italic 14px/18px "Liberation Serif", serif; }
</style>
<div class="row filter"><div class="kind"><ps-icon name="find"></ps-icon><ps-select label="过滤" value="类型"></ps-select></div>
<div class="kinds"><button aria-label="像素"><ps-icon name="image"></ps-icon></button><button aria-label="调整"><ps-icon name="adjust"></ps-icon></button><button aria-label="文字"><ps-icon name="ltype"></ps-icon></button><button aria-label="形状"><ps-icon name="shape"></ps-icon></button><button aria-label="智能对象"><ps-icon name="smart"></ps-icon></button></div><input class="toggle" type="checkbox" aria-label="过滤开关"></div>
<div class="row mode"><ps-select class="blend" label="混合模式" value="正常"></ps-select><label for="op">不透明度:</label><div class="pct"><input id="op" value="100%"><button aria-label="不透明度菜单"><ps-icon name="chev"></ps-icon></button></div></div>
<div class="row lock"><span>锁定:</span><div class="locks"><button aria-label="锁定透明"><ps-icon name="checker"></ps-icon></button><button aria-label="锁定图像"><ps-icon name="brush" size="14"></ps-icon></button><button aria-label="锁定位置"><ps-icon name="move" size="13"></ps-icon></button><button aria-label="锁定画板"><ps-icon name="board"></ps-icon></button><button aria-label="锁定全部"><ps-icon name="lock"></ps-icon></button></div><label for="fill">填充:</label><div class="pct"><input id="fill" value="100%"><button aria-label="填充菜单"><ps-icon name="chev"></ps-icon></button></div></div>
<div class="list"><div class="items"><div class="layer"><button class="eye" aria-label="可见"><ps-icon name="eye"></ps-icon></button><span class="thumb"></span><span>背景</span><ps-icon class="l" name="lockline"></ps-icon></div></div><div class="bar"></div></div>
<div class="foot"><button class="dim" aria-label="链接"><ps-icon name="chain"></ps-icon></button><button class="dim dd fx">fx</button><button aria-label="蒙版"><ps-icon name="lmask"></ps-icon></button><button class="dd" aria-label="调整图层"><ps-icon name="adjust"></ps-icon></button><button aria-label="新组"><ps-icon name="group"></ps-icon></button><button aria-label="新图层"><ps-icon name="plus"></ps-icon></button><button class="dim" aria-label="删除"><ps-icon name="trash"></ps-icon></button></div>`);

/* ---------- panel frame: tabs and a slotted body ---------- */
define('ps-panel', `<style>
:host { display: flex; flex-direction: column; flex: none; border: solid #383838; border-width: 1px 0; margin-bottom: 1px; }
:host([grow]) { flex: 1; min-height: 0; margin: 0; border-bottom: 0; }
</style><slot name="tabs"></slot><slot></slot>`);

/* ---------- application shell ---------- */
define('ps-app', `<style>
:host { display: flex; flex-direction: column; height: 100vh; border: 1px solid #383838; background: #535353; }
.frame { flex: 1; min-height: 0; display: flex; flex-direction: column; margin: 0 3px 3px; border: 1px solid #383838; }
main { flex: 1; min-height: 0; display: flex; }
.panels { width: 285px; flex: none; margin-left: 1px; border-left: 1px solid #383838; display: flex; flex-direction: column; }
.strip { height: 11px; background: #424242; justify-content: flex-end; padding-right: 6px; color: #dcdcdc; }
</style>
<ps-menubar></ps-menubar>
<div class="frame"><ps-options></ps-options>
<main><ps-toolbar></ps-toolbar><ps-document><ps-actions></ps-actions></ps-document><ps-dock></ps-dock>
<div class="panels"><button class="strip" aria-label="折叠面板"><ps-icon name="ffwd"></ps-icon></button>
<ps-panel><ps-tabs slot="tabs" names="颜色 色板 渐变 图案"></ps-tabs><ps-color></ps-color></ps-panel>
<ps-panel><ps-tabs slot="tabs" names="属性 调整 库"></ps-tabs><ps-properties></ps-properties></ps-panel>
<ps-panel grow><ps-tabs slot="tabs" names="图层 通道 路径"></ps-tabs><ps-layers></ps-layers></ps-panel></div></main></div>`);
</script>
</body>
</html>
